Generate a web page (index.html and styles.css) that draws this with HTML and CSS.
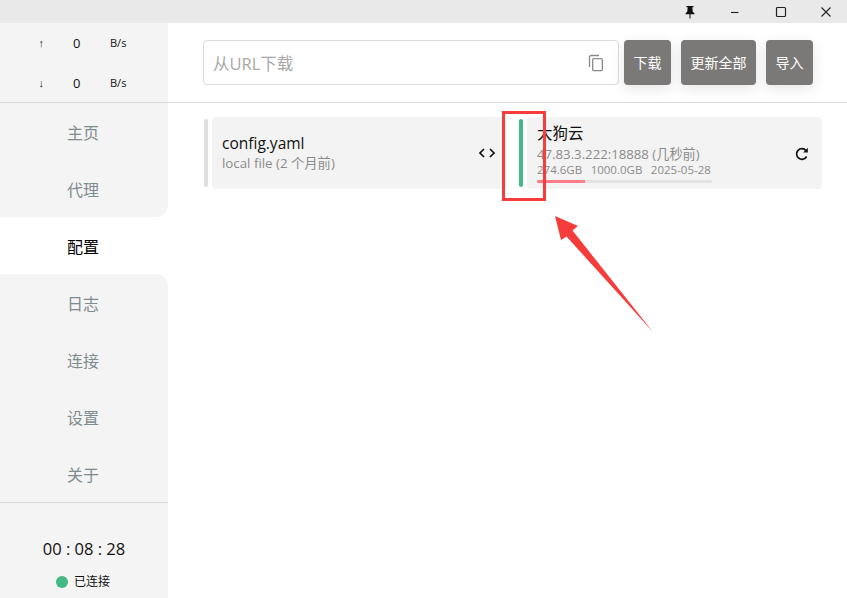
FILE: index.html
```html
<!DOCTYPE html>
<html lang="zh-CN">
<head>
<meta charset="utf-8">
<title>配置</title>
<link rel="stylesheet" href="styles.css">
</head>
<body>
<div class="app">
  <header class="titlebar">
    <button class="win-btn pin"><svg width="14" height="14" viewBox="0 0 14 14"><path d="M3.5 1h7v1.2H9.3l.5 4.6 1.6 1.4v1H7.500V13.500h-1V9.200H2.600v-1l1.600-1.400.5-4.600H3.500z" fill="#111"/></svg></button>
    <button class="win-btn"><svg width="12" height="12" viewBox="0 0 12 12"><path d="M2 6.500h7.500" stroke="#222" stroke-width="1.100"/></svg></button>
    <button class="win-btn"><svg width="12" height="12" viewBox="0 0 12 12"><rect x="1.500" y="1.500" width="9" height="9" rx="1" fill="none" stroke="#222" stroke-width="1.200"/></svg></button>
    <button class="win-btn"><svg width="12" height="12" viewBox="0 0 12 12"><path d="M1.500 1.500l9 9M10.500 1.500l-9 9" stroke="#222" stroke-width="1.100"/></svg></button>
  </header>
  <div class="body">
    <aside class="sidebar">
      <div class="traffic">
        <div class="traffic-row"><span class="arrow-cell">↑</span><span class="num">0</span><span class="unit">B/s</span></div>
        <div class="traffic-row"><span class="arrow-cell">↓</span><span class="num">0</span><span class="unit">B/s</span></div>
      </div>
      <nav class="nav">
        <a class="nav-item">主页</a>
        <a class="nav-item before-active">代理</a>
        <a class="nav-item active">配置</a>
        <a class="nav-item after-active">日志</a>
        <a class="nav-item">连接</a>
        <a class="nav-item">设置</a>
        <a class="nav-item">关于</a>
      </nav>
      <div class="status">
        <div class="clock">00 : 08 : 28</div>
        <div class="conn"><span class="dot"></span><span>已连接</span></div>
      </div>
    </aside>
    <main class="main">
      <div class="toolbar">
        <div class="url-input">
          <span class="placeholder">从URL下载</span>
          <svg class="paste" width="18" height="18" viewBox="0 0 18 18"><path d="M2.500 13V3a1.500 1.500 0 0 1 1.500-1.500h8" fill="none" stroke="#8a8a8a" stroke-width="1.300"/><rect x="5.700" y="4.700" width="9.600" height="12" rx="1" fill="none" stroke="#8a8a8a" stroke-width="1.300"/></svg>
        </div>
        <button class="btn first">下载</button>
        <button class="btn">更新全部</button>
        <button class="btn">导入</button>
      </div>
      <div class="profiles">
        <div class="profile">
          <span class="strip"></span>
          <div class="card">
            <div class="info local">
              <div class="name">config.yaml</div>
              <div class="sub">local file (2 个月前)</div>
            </div>
            <svg class="code" width="18" height="12" viewBox="0 0 18 12"><path d="M6 2L2 6l4 4M12 2l4 4-4 4" fill="none" stroke="#111" stroke-width="1.700"/></svg>
          </div>
        </div>
        <div class="profile">
          <span class="strip on"></span>
          <div class="card">
            <div class="info remote">
              <div class="name">大狗云</div>
              <div class="sub">47.83.3.222:18888 (几秒前)</div>
              <div class="meta"><span>274.6GB</span><span>1000.0GB</span><span>2025-05-28</span></div>
              <div class="bar"><div class="bar-fill" style="width:27.46%"></div></div>
            </div>
            <svg class="reload" width="16" height="16" viewBox="0 0 16 16"><path d="M12.600 10.500A5.300 5.300 0 1 1 12 4.600" fill="none" stroke="#111" stroke-width="1.700"/><path d="M13.800 1.800v4.600H9.200z" fill="#111"/></svg>
          </div>
        </div>
      </div>
    </main>
  </div>
  <div class="callout-box"></div>
  <svg class="callout-arrow" width="847" height="598" viewBox="0 0 847 598"><polygon points="555,216 578,226 572.500,230.500 653,332 566.500,236.500 561,240" fill="#f73c3c"/></svg>
</div>
</body>
</html>
```
FILE: styles.css
```css
* { box-sizing: border-box; }
html, body { margin: 0; height: 100%; }
body {
  font-family: "Open Sans", "Noto Sans CJK SC", sans-serif;
  color: #111;
  background: #fff;
  overflow: hidden;
}
.app { position: relative; width: 847px; height: 598px; display: flex; flex-direction: column; }
.titlebar {
  height: 23px; flex: none; background: #e9e9e9;
  display: flex; justify-content: flex-end; align-items: center;
}
.win-btn {
  width: 45.500px; height: 23px; border: 0; padding: 0 0 0 4px; background: none;
  display: flex; align-items: center; justify-content: center;
}
.body { flex: 1; display: flex; min-height: 0; }
.sidebar { width: 168px; flex: none; display: flex; flex-direction: column; background: #f4f4f4; }
.traffic {
  height: 80px; flex: none; border-bottom: 1px solid #dcdcdc;
  display: flex; flex-direction: column; gap: 1px;
}
.traffic-row { height: 39.500px; display: grid; grid-template-columns: 83px 35px 50px; align-items: center; }
.arrow-cell { font-size: 11px; text-align: right; padding-right: 39px; font-family: "Liberation Sans", sans-serif; color: #222; }
.num { font-size: 13px; text-align: left; margin-left: -10px; }
.unit { font-size: 11px; margin-left: -8px; }
.nav { height: 399px; flex: none; background: #fff; display: flex; flex-direction: column; }
.nav-item {
  height: 57px; flex: none; display: flex; align-items: center; justify-content: center;
  background: #f4f4f4; color: #7f8c8f; font-size: 16px; padding: 0 2px 0 0;
}
.nav-item.active { background: #fff; color: #000; padding-top: 1px; }
.before-active { border-bottom-right-radius: 12px; }
.after-active { border-top-right-radius: 12px; }
.status { flex: 1; border-top: 1px solid #dcdcdc; display: flex; flex-direction: column; align-items: center; padding-top: 35px; }
.clock { font-size: 16.500px; line-height: 22px; }
.conn { display: flex; align-items: center; gap: 6px; font-size: 12px; margin: 12px 2px 0 0; line-height: 20px; }
.dot { width: 12px; height: 12px; border-radius: 50%; background: #42b883; }
.main { flex: 1; min-width: 0; display: flex; flex-direction: column; }
.toolbar {
  height: 80px; flex: none; border-bottom: 1px solid #dcdcdc;
  display: flex; align-items: flex-start; padding: 17px 0 0 35px;
}
.url-input {
  width: 416px; height: 45px; border: 1px solid #dcdcdc; border-radius: 4px; background: #fff;
  display: flex; align-items: center; justify-content: space-between; padding: 0 13px 0 9px;
}
.placeholder { font-size: 16.500px; color: #a8a8a8; }
.btn {
  height: 45px; border: 0; border-radius: 4px; background: #7b7977; color: #fff;
  font: 14px "Open Sans", "Noto Sans CJK SC", sans-serif; padding: 0 0 2px; margin-left: 10px;
  box-shadow: 0 4px 14px rgba(0,0,0,.10);
  width: 47px;
}
.btn.first { margin-left: 5px; }
.btn:nth-of-type(2) { width: 75px; }
.profiles { display: grid; grid-template-columns: 303px 303px; column-gap: 12px; padding: 14px 0 0 36px; }
.profile { display: flex; align-items: center; gap: 4px; height: 72px; }
.strip { width: 4px; height: 68px; border-radius: 2px; background: #dedede; flex: none; }
.strip.on { background: #42b883; }
.card {
  flex: 1; height: 72px; background: #f3f3f3; border-radius: 4px;
  display: flex; align-items: center; justify-content: space-between; padding: 0 10px;
}
.info { align-self: flex-start; }
.local { padding-top: 16px; }
.remote { padding-top: 6px; }
.name { font-size: 15.500px; line-height: 20px; color: #111; }
.sub { font-size: 13.300px; line-height: 20px; color: #8b8b8b; }
.remote .sub { font-size: 13.200px; margin-top: 1px; }
.meta { display: flex; gap: 8.500px; font-size: 11.500px; line-height: 15px; color: #8b8b8b; margin-top: -2px; }
.bar { width: 175px; height: 3px; background: #e2e2e2; border-radius: 2px; margin-top: 3px; overflow: hidden; }
.bar-fill { height: 100%; background: #ff7c88; }
.code { margin-right: 1px; }
.reload { margin: 2px 2px 0 0; }
.callout-box { position: absolute; left: 502px; top: 111px; width: 44px; height: 90px; border: 3px solid #f73c3c; }
.callout-arrow { position: absolute; left: 0; top: 0; pointer-events: none; }
```
